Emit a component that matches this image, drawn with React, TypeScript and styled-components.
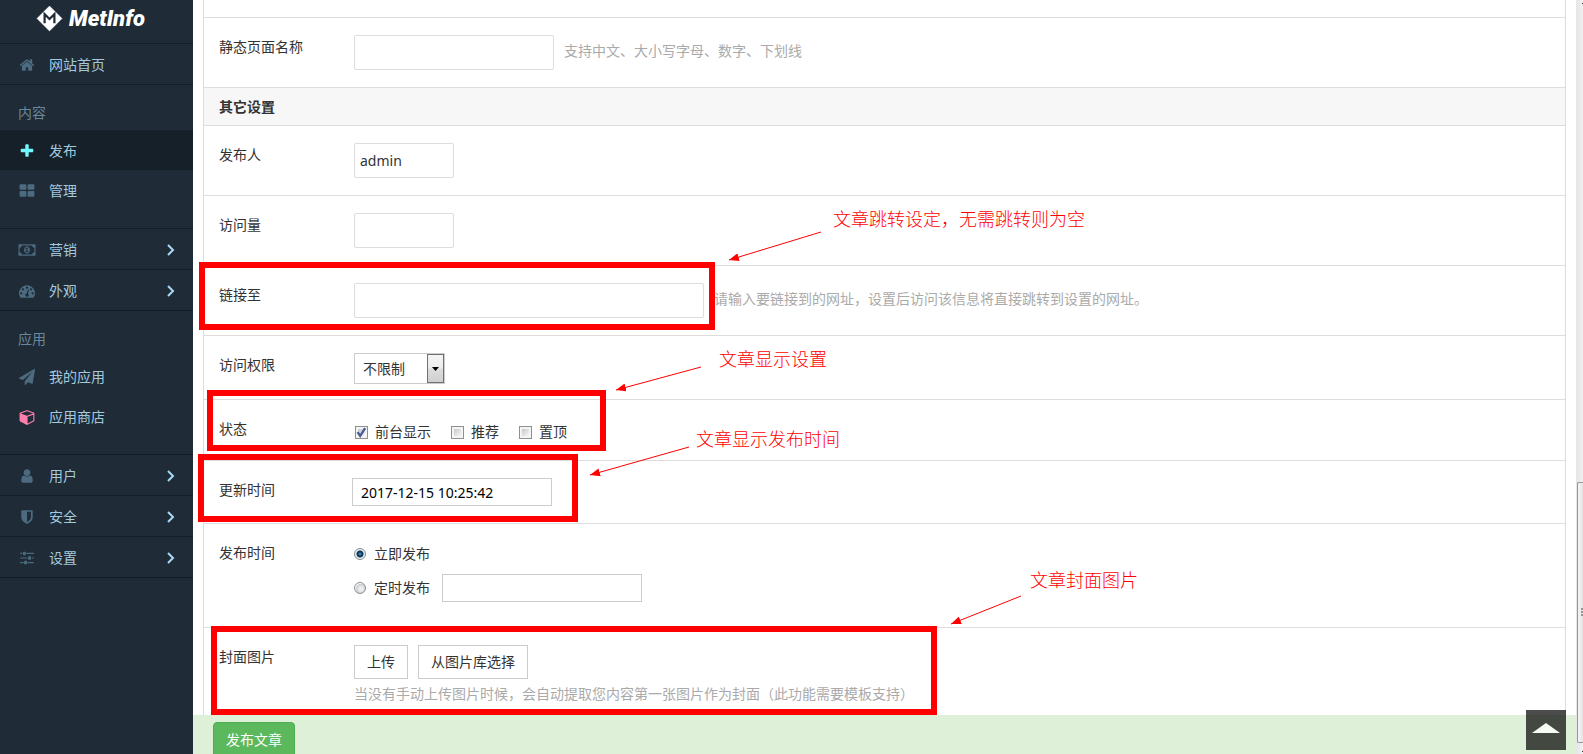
import React from 'react';
import styled, { createGlobalStyle } from 'styled-components';

const GlobalStyle = createGlobalStyle`
  * { box-sizing: border-box; }
  html, body, #root { height: 100%; }
  body {
    margin: 0;
    overflow: hidden;
    background: #fff;
    color: #333;
    font: 14px/24px 'Noto Sans', 'Noto Sans CJK SC', sans-serif;
  }
  input, button, select { font: inherit; color: inherit; margin: 0; }
`;

const Shell = styled.div`
  display: flex;
  height: 100vh;
  overflow: hidden;
`;

/* ---------- sidebar ---------- */

const Sidebar = styled.aside`
  flex: none;
  width: 193px;
  background: #1f2b36;
`;

const Brand = styled.a`
  display: flex;
  align-items: flex-start;
  gap: 6px;
  height: 44px;
  padding: 5px 0 0 36px;
  border-bottom: 1px solid #151e25;
  color: #fff;
  text-decoration: none;
  font: italic 900 22px/28px Roboto, 'Liberation Sans', sans-serif;
`;

const NavGroup = styled.nav<{ $spaced?: boolean }>`
  display: flex;
  flex-direction: column;
  padding-bottom: ${p => (p.$spaced ? 18 : 0)}px;
  border-bottom: ${p => (p.$spaced ? '1px solid #151e25' : '0')};
`;

const NavHeading = styled.h2`
  margin: 0;
  padding: 16px 18px 5px;
  color: #68879b;
  font-size: 14px;
  font-weight: 400;
  line-height: 24px;
`;

const NavLink = styled.a<{ $active?: boolean; $ruled?: boolean }>`
  display: grid;
  grid-template-columns: 18px 1fr 10px;
  align-items: center;
  column-gap: 13px;
  height: ${p => (p.$ruled ? 41 : 40)}px;
  padding: 2px 17px 0 18px;
  border-bottom: ${p => (p.$ruled ? '1px solid #151e25' : '0')};
  background: ${p => (p.$active ? '#162028' : 'transparent')};
  color: #a3c9df;
  text-decoration: none;
`;

const Glyph = styled.svg<{ $tint?: string }>`
  width: 18px;
  height: 16px;
  fill: ${p => p.$tint ?? '#4c6b80'};
`;

const Chevron = styled.svg`
  width: 10px;
  height: 14px;
  fill: none;
  stroke: #a9d9f5;
  stroke-width: 2;
`;

/* ---------- form ---------- */

const Main = styled.main`
  position: relative;
  flex: 1;
  min-width: 0;
  padding: 0 10px;
  overflow: hidden;
`;

const Panel = styled.form`
  border: 1px solid #ddd;
  border-width: 0 1px;
`;

const PreviousRow = styled.div`
  height: 18px;
  border-bottom: 1px solid #ddd;
`;

const Row = styled.div<{ $end?: number }>`
  display: flex;
  align-items: flex-start;
  padding: 17px 15px ${p => p.$end ?? 17}px;
  border-bottom: 1px solid #ddd;
`;

const RowLabel = styled.label`
  flex: none;
  width: 135px;
`;

const Field = styled.div`
  display: flex;
  align-items: center;
  flex-wrap: wrap;
  gap: 10px;
`;

const SectionTitle = styled.h3`
  margin: 0;
  padding: 7px 15px 6px;
  border-bottom: 1px solid #ddd;
  background: #f7f7f7;
  font-size: 14px;
  line-height: 24px;
`;

const Hint = styled.span`
  color: #aaa;
`;

const SideHint = styled(Hint)`
  padding-bottom: 4px;
`;

const TextInput = styled.input<{ $w: number }>`
  width: ${p => p.$w}px;
  height: 35px;
  padding: 0 5px;
  border: 1px solid #ddd;
  border-radius: 2px;
  background: #fff;
`;

const DateInput = styled.input`
  width: 200px;
  height: 28px;
  padding: 0 8px;
  border: 1px solid #ccc;
  background: #fff;
  color: #000;
`;

const DateField = styled(Field)`
  margin-left: -2px;
`;

const SelectBox = styled.div`
  display: grid;
  width: 91px;
  height: 31px;
  border: 1px solid #ccc;
`;

const Select = styled.select`
  grid-area: 1 / 1;
  padding: 0 8px;
  border: 0;
  appearance: none;
  background: #fff;
`;

const SelectArrow = styled.svg`
  grid-area: 1 / 1;
  justify-self: end;
  width: 17px;
  height: 29px;
  border: 1px solid #707070;
  background: linear-gradient(#f4f4f4 0%, #ececec 48%, #ddd 52%, #cfcfcf 100%);
  pointer-events: none;
`;

const Choices = styled.div`
  display: flex;
  gap: 19px;
  padding-top: 3px;
`;

const Stack = styled.div`
  display: flex;
  flex-direction: column;
  gap: 7px;
`;

const ChoiceLine = styled.div`
  display: flex;
  align-items: center;
  gap: 12px;
  min-height: 26px;
`;

const Choice = styled.label`
  display: flex;
  align-items: center;
  gap: 7px;
`;

const Check = styled.input`
  width: 13px;
  height: 13px;
  margin-left: 1px;
  appearance: none;
  border: 1px solid #8e8f8f;
  background: linear-gradient(135deg, #c4c8ce, #f6f6f6) content-box, #f4f4f4;
  padding: 2px;
  &:checked {
    background:
      url("data:image/svg+xml,%3Csvg xmlns='http://www.w3.org/2000/svg' viewBox='0 0 11 11'%3E%3Cpath d='M2.2 5.2 4.4 8.4 8.6 1.8' fill='none' stroke='%234b5d97' stroke-width='2'/%3E%3C/svg%3E") border-box,
      linear-gradient(135deg, #c4c8ce, #f6f6f6) content-box, #f4f4f4;
  }
`;

const Radio = styled.input`
  width: 12px;
  height: 12px;
  margin-right: 1px;
  appearance: none;
  border: 1px solid #8e8f8f;
  border-radius: 50%;
  background: radial-gradient(circle at 60% 60%, #eee 20%, #c9ccd0 58%, #fafafa 64%);
  &:checked {
    background: radial-gradient(circle, #45b4e4 0, #123a5c 2px, #123a5c 3px, #e8eef2 4px);
  }
`;

const PlainButton = styled.button`
  height: 34px;
  padding: 0 12px;
  border: 1px solid #ccc;
  background: #fff;
`;

const CoverField = styled.div`
  display: flex;
  flex-direction: column;
  gap: 3px;
`;

const SubmitBar = styled.div`
  position: absolute;
  inset: auto 0 0 0;
  height: 39px;
  padding: 7px 20px 0;
  background: #dff0d8;
  overflow: hidden;
`;

const SubmitButton = styled.button`
  height: 36px;
  padding: 0 12px;
  border: 1px solid #4cae4c;
  border-radius: 4px;
  background: #5cb85c;
  color: #fff;
`;

const ToTop = styled.button`
  position: absolute;
  right: 10px;
  bottom: 4px;
  display: grid;
  place-items: center;
  width: 40px;
  height: 40px;
  padding: 0 0 4px;
  border: 0;
  background: rgba(0, 0, 0, 0.7);
`;

const ScrollTrack = styled.div`
  display: flex;
  flex: none;
  flex-direction: column;
  width: 7px;
  padding-left: 1px;
  background: linear-gradient(90deg, #e6e6e6, #f0f0f0);
`;

const ScrollArrow = styled.svg<{ $grow?: boolean }>`
  flex: ${p => (p.$grow ? '483 1 0' : 'none')};
  width: 6px;
  height: 11px;
`;

const ScrollThumb = styled.div`
  display: flex;
  flex: 260 1 0;
  align-items: center;
  justify-content: flex-end;
  border: 1px solid #979797;
  border-right: 0;
  border-radius: 2px 0 0 2px;
  background: linear-gradient(90deg, #f5f5f5, #e4e4e4);
`;

/* ---------- annotations laid over the form ---------- */

const Frame = styled.div<{ $x: number; $y: number; $w: number; $h: number }>`
  position: absolute;
  left: ${p => p.$x}px;
  top: ${p => p.$y}px;
  width: ${p => p.$w}px;
  height: ${p => p.$h}px;
  border: 6px solid #f00;
  pointer-events: none;
`;

const Note = styled.span<{ $x: number; $y: number }>`
  position: absolute;
  left: ${p => p.$x}px;
  top: ${p => p.$y}px;
  color: #f00;
  font: 300 18px/24px 'Noto Sans CJK SC', sans-serif;
  white-space: nowrap;
  pointer-events: none;
`;

const Arrows = styled.svg`
  position: absolute;
  left: 0;
  top: 0;
  width: 100%;
  height: 100%;
  pointer-events: none;
`;

const icons = {
  home: 'M1472 992v480q0 26-19 45t-45 19h-384v-384h-256v384h-384q-26 0-45-19t-19-45v-480q0-1 .5-3t.5-3l575-474 575 474q1 2 1 6zm223-69l-62 74q-8 9-21 11h-3q-13 0-21-7l-692-577-692 577q-12 8-24 7-13-2-21-11l-62-74q-8-10-7-23.5t11-21.5l719-599q32-26 76-26t76 26l244 204v-195q0-14 9-23t23-9h192q14 0 23 9t9 23v408l219 182q10 8 11 21.5t-7 23.5z',
  plus: 'M1600 736v192q0 40-28 68t-68 28h-416v416q0 40-28 68t-68 28h-192q-40 0-68-28t-28-68v-416h-416q-40 0-68-28t-28-68v-192q0-40 28-68t68-28h416v-416q0-40 28-68t68-28h192q40 0 68 28t28 68v416h416q40 0 68 28t28 68z',
  grid: 'M832 1024v384q0 52-38 90t-90 38h-512q-52 0-90-38t-38-90v-384q0-52 38-90t90-38h512q52 0 90 38t38 90zm0-768v384q0 52-38 90t-90 38h-512q-52 0-90-38t-38-90v-384q0-52 38-90t90-38h512q52 0 90 38t38 90zm896 768v384q0 52-38 90t-90 38h-512q-52 0-90-38t-38-90v-384q0-52 38-90t90-38h512q52 0 90 38t38 90zm0-768v384q0 52-38 90t-90 38h-512q-52 0-90-38t-38-90v-384q0-52 38-90t90-38h512q52 0 90 38t38 90z',
  money: 'M768 1152h384v-96h-128v-448h-114l-148 137 77 80q42-37 55-57h2v288h-128v96zm512-256q0 70-21 142t-59.5 134-101.5 101-138 39-138-39-101.5-101-59.5-134-21-142 21-142 59.5-134 101.5-101 138-39 138 39 101.5 101 59.5 134 21 142zm512 256v-512q-106 0-181-75t-75-181h-1152q0 106-75 181t-181 75v512q106 0 181 75t75 181h1152q0-106 75-181t181-75zm128-832v1152q0 26-19 45t-45 19h-1792q-26 0-45-19t-19-45v-1152q0-26 19-45t45-19h1792q26 0 45 19t19 45z',
  gauge: 'M384 1152q0-53-37.5-90.5t-90.5-37.5-90.5 37.5-37.5 90.5 37.5 90.5 90.5 37.5 90.5-37.5 37.5-90.5zm192-448q0-53-37.5-90.5t-90.5-37.5-90.5 37.5-37.5 90.5 37.5 90.5 90.5 37.5 90.5-37.5 37.5-90.5zm428 481l101-382q6-26-7.5-48.5t-38.5-29.5-48 6.5-30 39.5l-101 382q-60 5-107 43.5t-63 98.5q-20 77 20 146t117 89 146-20 89-117q16-60-6-117t-72-91zm660-33q0-53-37.5-90.5t-90.5-37.5-90.5 37.5-37.5 90.5 37.5 90.5 90.5 37.5 90.5-37.5 37.5-90.5zm-640-640q0-53-37.5-90.5t-90.5-37.5-90.5 37.5-37.5 90.5 37.5 90.5 90.5 37.5 90.5-37.5 37.5-90.5zm448 192q0-53-37.5-90.5t-90.5-37.5-90.5 37.5-37.5 90.5 37.5 90.5 90.5 37.5 90.5-37.5 37.5-90.5zm320 448q0 261-141 483-19 29-54 29h-1402q-35 0-54-29-141-221-141-483 0-182 71-348t191-286 286-191 348-71 348 71 286 191 191 286 71 348z',
  plane: 'M1764 11q33 24 27 64l-256 1536q-5 29-32 45-14 8-31 8-11 0-24-5l-453-185-242 295q-18 23-49 23-13 0-22-4-19-7-30.5-23.5t-11.5-36.5v-349l864-1059-1069 925-395-162q-37-14-40-55-2-40 32-59l1664-960q15-9 32-9 20 0 36 11z',
  cube: 'M896 1629l640-349v-636l-640 233v752zm-64-865l698-254-698-254-698 254zm832-252v768q0 35-18 65t-49 47l-704 384q-28 16-61 16t-61-16l-704-384q-31-17-49-47t-18-65v-768q0-40 23-73t61-47l704-256q22-8 44-8t44 8l704 256q38 14 61 47t23 73z',
  user: 'M1536 1399q0 109-62.5 187t-150.5 78h-854q-88 0-150.5-78t-62.5-187q0-85 8.5-160.5t31.5-152 58.5-131 94-89 134.5-34.5q131 128 313 128t313-128q76 0 134.5 34.5t94 89 58.5 131 31.5 152 8.5 160.5zm-256-887q0 159-112.5 271.5t-271.5 112.5-271.5-112.5-112.5-271.5 112.5-271.5 271.5-112.5 271.5 112.5 112.5 271.5z',
  shield: 'M1344 960v-640h-448v1137q119-63 213-137 235-184 235-360zm192-768v768q0 86-33.5 170.5t-83 150-118 127.5-126.5 103-121 77.5-89.5 49.5-42.5 20q-12 6-26 6t-26-6q-16-7-42.5-20t-89.5-49.5-121-77.5-126.5-103-118-127.5-83-150-33.5-170.5v-768q0-26 19-45t45-19h1152q26 0 45 19t19 45z',
  sliders:
    'M128 320h256v128H128zM832 320h832v128H832zM512 192h192q64 0 64 64v256q0 64-64 64H512q-64 0-64-64V256q0-64 64-64zM128 832h832v128H128zM1408 832h256v128h-256zM1088 704h192q64 0 64 64v256q0 64-64 64h-192q-64 0-64-64V768q0-64 64-64zM128 1344h384v128H128zM960 1344h704v128H960zM640 1216h192q64 0 64 64v256q0 64-64 64H640q-64 0-64-64v-256q0-64 64-64z',
};

type IconName = keyof typeof icons;

const viewBoxes: Partial<Record<IconName, string>> = {
  money: '0 0 1920 1792',
  cube: '-64 0 1792 1792',
};

interface NavItem {
  icon: IconName;
  text: string;
  tint?: string;
  active?: boolean;
}

const Item = ({ icon, text, tint, active, ruled, more }: NavItem & { ruled?: boolean; more?: boolean }) => (
  <NavLink href="#" $active={active} $ruled={ruled}>
    <Glyph viewBox={viewBoxes[icon] ?? '0 0 1792 1792'} $tint={tint} aria-hidden>
      <path d={icons[icon]} />
    </Glyph>
    {text}
    {more && (
      <Chevron viewBox="0 0 10 14" aria-hidden>
        <path d="M2 2l5 5-5 5" />
      </Chevron>
    )}
  </NavLink>
);

const contentItems: NavItem[] = [
  { icon: 'plus', text: '发布', tint: '#72f6ff', active: true },
  { icon: 'grid', text: '管理' },
];
const promoItems: NavItem[] = [
  { icon: 'money', text: '营销' },
  { icon: 'gauge', text: '外观' },
];
const appItems: NavItem[] = [
  { icon: 'plane', text: '我的应用' },
  { icon: 'cube', text: '应用商店', tint: '#ff7fac' },
];
const systemItems: NavItem[] = [
  { icon: 'user', text: '用户' },
  { icon: 'shield', text: '安全' },
  { icon: 'sliders', text: '设置' },
];

const frames = [
  { x: 6, y: 262, w: 516, h: 68 },
  { x: 14, y: 390, w: 399, h: 61 },
  { x: 5, y: 454, w: 380, h: 68 },
  { x: 18, y: 626, w: 726, h: 89 },
];

const notes = [
  { x: 640, y: 206, text: '文章跳转设定，无需跳转则为空' },
  { x: 526, y: 346, text: '文章显示设置' },
  { x: 503, y: 426, text: '文章显示发布时间' },
  { x: 837, y: 567, text: '文章封面图片' },
];

const arrows = [
  [628, 232, 536, 260],
  [508, 367, 423, 390],
  [496, 447, 397, 475],
  [828, 596, 758, 624],
];

export default function App() {
  return (
    <>
      <GlobalStyle />
      <Shell>
        <Sidebar>
          <Brand href="#">
            <svg width="27" height="27" viewBox="0 0 27 27" aria-hidden>
              <path d="M13.5 1.2 25.8 13.5 13.5 25.8 1.2 13.5z" fill="#fff" stroke="#fff" strokeLinejoin="round" />
              <path d="M8.6 18.3V9.2l4.9 4.8 4.9-4.8v9.1" fill="none" stroke="#1f2b36" strokeWidth="2.2" />
            </svg>
            MetInfo
          </Brand>
          <NavGroup>
            <Item icon="home" text="网站首页" ruled />
          </NavGroup>
          <NavGroup $spaced>
            <NavHeading>内容</NavHeading>
            {contentItems.map(i => <Item key={i.text} {...i} />)}
          </NavGroup>
          <NavGroup>
            {promoItems.map(i => <Item key={i.text} {...i} ruled more />)}
          </NavGroup>
          <NavGroup $spaced>
            <NavHeading>应用</NavHeading>
            {appItems.map(i => <Item key={i.text} {...i} />)}
          </NavGroup>
          <NavGroup>
            {systemItems.map(i => <Item key={i.text} {...i} ruled more />)}
          </NavGroup>
        </Sidebar>

        <Main>
          <Panel>
            <PreviousRow />
            <Row>
              <RowLabel htmlFor="page-name">静态页面名称</RowLabel>
              <Field>
                <TextInput id="page-name" $w={200} />
                <SideHint>支持中文、大小写字母、数字、下划线</SideHint>
              </Field>
            </Row>
            <SectionTitle>其它设置</SectionTitle>
            <Row>
              <RowLabel htmlFor="author">发布人</RowLabel>
              <Field><TextInput id="author" $w={100} defaultValue="admin" /></Field>
            </Row>
            <Row>
              <RowLabel htmlFor="hits">访问量</RowLabel>
              <Field><TextInput id="hits" $w={100} /></Field>
            </Row>
            <Row>
              <RowLabel htmlFor="link">链接至</RowLabel>
              <Field>
                <TextInput id="link" $w={350} />
                <SideHint>请输入要链接到的网址，设置后访问该信息将直接跳转到设置的网址。</SideHint>
              </Field>
            </Row>
            <Row $end={15}>
              <RowLabel htmlFor="access">访问权限</RowLabel>
              <SelectBox>
                <Select id="access"><option>不限制</option></Select>
                <SelectArrow viewBox="0 0 15 27" aria-hidden><path d="M4 12h7l-3.500 4z" /></SelectArrow>
              </SelectBox>
            </Row>
            <Row $end={16}>
              <RowLabel as="span">状态</RowLabel>
              <Choices>
                <Choice><Check type="checkbox" defaultChecked />前台显示</Choice>
                <Choice><Check type="checkbox" />推荐</Choice>
                <Choice><Check type="checkbox" />置顶</Choice>
              </Choices>
            </Row>
            <Row>
              <RowLabel htmlFor="updated">更新时间</RowLabel>
              <DateField><DateInput id="updated" defaultValue="2017-12-15 10:25:42" /></DateField>
            </Row>
            <Row $end={25}>
              <RowLabel as="span">发布时间</RowLabel>
              <Stack>
                <ChoiceLine>
                  <Choice><Radio type="radio" name="when" defaultChecked />立即发布</Choice>
                </ChoiceLine>
                <ChoiceLine>
                  <Choice><Radio type="radio" name="when" />定时发布</Choice>
                  <DateInput aria-label="定时发布" />
                </ChoiceLine>
              </Stack>
            </Row>
            <Row>
              <RowLabel as="span">封面图片</RowLabel>
              <CoverField>
                <Field>
                  <PlainButton type="button">上传</PlainButton>
                  <PlainButton type="button">从图片库选择</PlainButton>
                </Field>
                <Hint>当没有手动上传图片时候，会自动提取您内容第一张图片作为封面（此功能需要模板支持）</Hint>
              </CoverField>
            </Row>
          </Panel>

          {frames.map(f => <Frame key={f.y} $x={f.x} $y={f.y} $w={f.w} $h={f.h} />)}
          {notes.map(n => <Note key={n.y} $x={n.x} $y={n.y}>{n.text}</Note>)}
          <Arrows aria-hidden>
            <defs>
              <marker id="tip" viewBox="0 0 10 8" refX="10" refY="4" markerWidth="10" markerHeight="8" markerUnits="userSpaceOnUse" orient="auto">
                <path d="M0 0 10 4 0 8z" fill="#f00" />
              </marker>
            </defs>
            {arrows.map(([x1, y1, x2, y2]) => (
              <line key={y1} x1={x1} y1={y1} x2={x2} y2={y2} stroke="#f00" markerEnd="url(#tip)" />
            ))}
          </Arrows>

          <SubmitBar><SubmitButton type="button">发布文章</SubmitButton></SubmitBar>
          <ToTop type="button" aria-label="返回顶部">
            <svg width="30" height="10" viewBox="0 0 30 10" aria-hidden>
              <path d="M15 0 29 10H1z" fill="#f6fcf4" />
            </svg>
          </ToTop>
        </Main>

        <ScrollTrack aria-hidden>
          <ScrollArrow $grow><path d="M5 3h1v1H5z" fill="#333" /></ScrollArrow>
          <ScrollThumb>
            <svg width="2" height="8" viewBox="0 0 2 8">
              <path d="M0 1h2M0 4h2M0 7h2" stroke="#444" />
            </svg>
          </ScrollThumb>
          <ScrollArrow><path d="M5 8h1v1H5z" fill="#333" /></ScrollArrow>
        </ScrollTrack>
      </Shell>
    </>
  );
}
